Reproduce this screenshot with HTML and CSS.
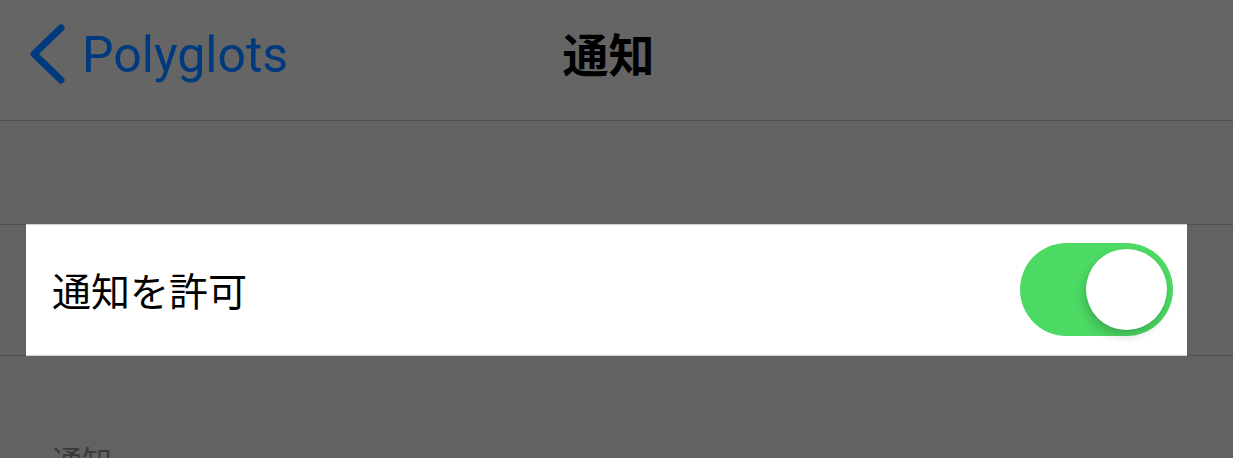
FILE: index.html
```html
<!DOCTYPE html>
<html lang="ja">
<head>
<meta charset="utf-8">
<title>通知</title>
<link rel="stylesheet" href="styles.css">
</head>
<body>
<div class="screen">
  <header class="nav">
    <a class="back">
      <svg class="chev" width="40" height="64" viewBox="0 0 40 64">
        <polyline points="33,6 6,32 33,58" fill="none" stroke="#003a7e" stroke-width="7" stroke-linecap="round" stroke-linejoin="round"/>
      </svg>
      <span class="back-label">Polyglots</span>
    </a>
    <h1 class="title">通知</h1>
  </header>
  <div class="spacer"></div>
  <section class="group">
    <div class="row">
      <span class="row-label">通知を許可</span>
      <div class="switch"><div class="knob"></div></div>
    </div>
  </section>
  <div class="section-head">通知</div>
</div>
</body>
</html>
```
FILE: styles.css
```css
html, body {
  margin: 0;
  padding: 0;
  background: #626264;
  overflow: hidden;
}
.screen {
  width: 1233px;
  height: 458px;
  background: #626264;
  font-family: "Noto Sans CJK JP", "Noto Sans", sans-serif;
}
.nav {
  position: relative;
  height: 120px;
  background: #656565;
  border-bottom: 1px solid #4f4f4f;
  display: flex;
  align-items: center;
}
.back {
  display: flex;
  align-items: center;
  padding-left: 28px;
  margin-top: -12px;
  color: #003a7e;
}
.chev {
  display: block;
}
.back-label {
  font-family: Roboto, "Noto Sans", sans-serif;
  font-size: 50px;
  margin-left: 14px;
  margin-top: 2px;
}
.title {
  position: absolute;
  left: 0;
  right: 0;
  top: 0;
  margin: 0;
  text-align: center;
  line-height: 104px;
  font-size: 46px;
  font-weight: 700;
  color: #000;
  padding-right: 16px;
}
.spacer {
  height: 103px;
}
.group {
  border-top: 1px solid #4f4f4f;
  border-bottom: 1px solid #4f4f4f;
  height: 130px;
}
.row {
  margin: -1px 46px 0 26px;
  height: 130px;
  background: #fff;
  border-top: 1px solid #cfcfcf;
  border-bottom: 1px solid #cfcfcf;
  display: flex;
  align-items: center;
  justify-content: space-between;
  padding: 0 14px 0 26px;
}
.row-label {
  font-size: 39px;
  color: #000;
  margin-top: -2px;
}
.switch {
  width: 153px;
  height: 93px;
  border-radius: 47px;
  background: #4cd964;
  position: relative;
  margin-top: -2px;
}
.knob {
  position: absolute;
  top: 6px;
  right: 6px;
  width: 81px;
  height: 81px;
  border-radius: 50%;
  background: #fff;
  box-shadow: -2px 6px 10px rgba(0,0,0,0.18), 0 1px 1px rgba(0,0,0,0.06);
}
.section-head {
  padding: 83px 0 0 52px;
  font-size: 30px;
  color: #3a3a3a;
  line-height: 40px;
}
```
